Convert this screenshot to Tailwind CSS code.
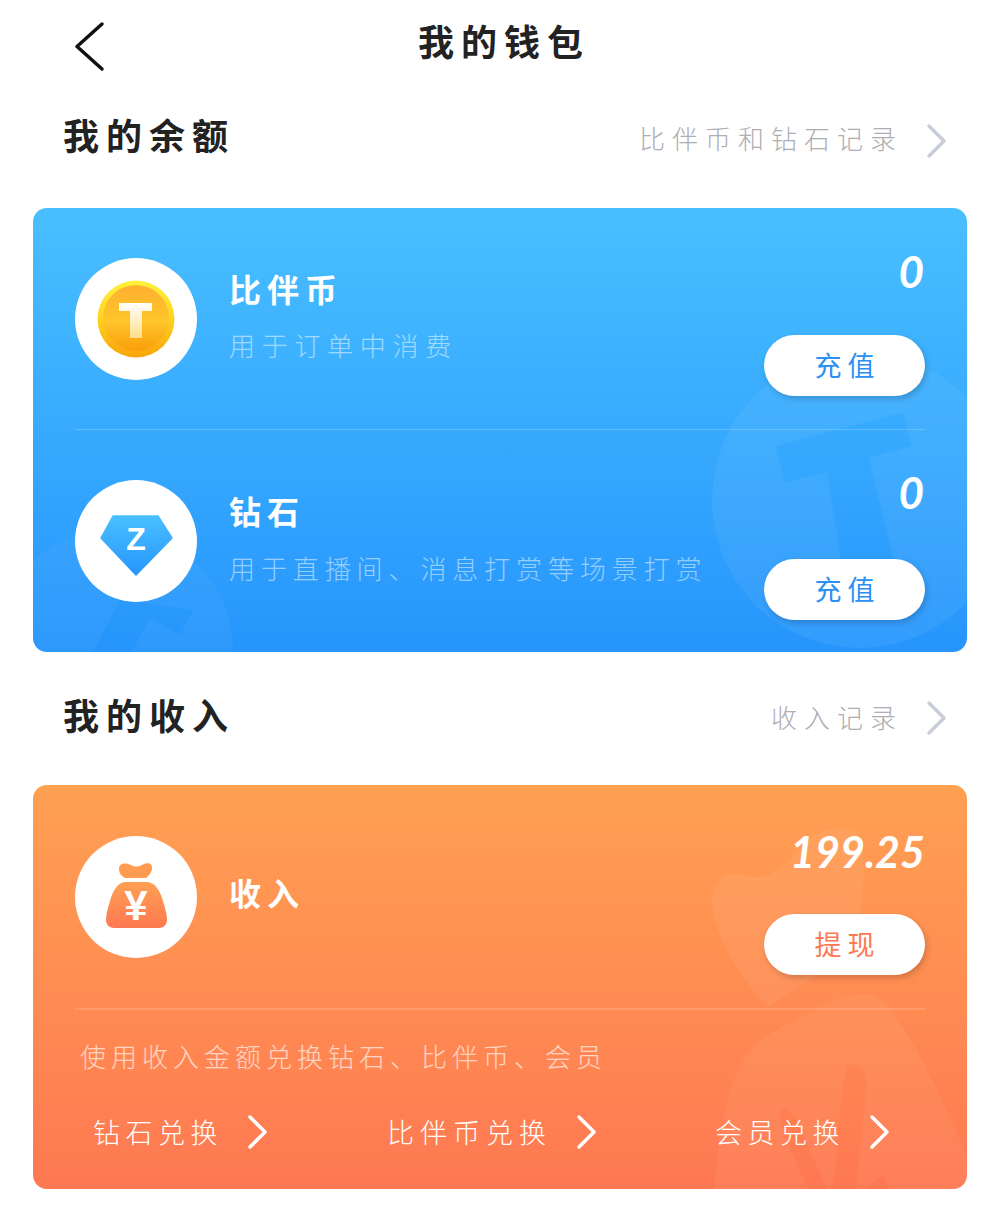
<!DOCTYPE html>
<html lang="zh-CN">
<head>
    <meta charset="UTF-8">
    <meta name="viewport" content="width=device-width, initial-scale=1.0">
    <title>我的钱包</title>
    <script src="https://cdn.jsdelivr.net/npm/@tailwindcss/browser@4"></script>
</head>
<body class="bg-white font-['Noto_Sans_CJK_SC',sans-serif]">
<div class="w-[1000px] h-[1219px] overflow-hidden">

    <!-- header -->
    <div class="relative h-[90px] flex items-center justify-center">
        <svg class="absolute left-[72px] top-[20px]" width="36" height="54" viewBox="0 0 36 54" fill="none">
            <path d="M30 4 L5 26.500 L30 49" stroke="#111" stroke-width="3.500" stroke-linecap="round" stroke-linejoin="round"/>
        </svg>
        <h1 class="text-[36px] leading-none font-bold tracking-[7px] text-[#222] -mt-[10px] ml-[8px]">我的钱包</h1>
    </div>

    <!-- balance title -->
    <div class="h-[118px] pl-[63px] pr-[52px] flex items-start justify-between pt-[22px]">
        <h2 class="text-[36px] leading-[44px] font-bold tracking-[7px] text-[#222]">我的余额</h2>
        <div class="flex items-center gap-[23px] mt-[7px] h-[44px]">
            <span class="text-[26px] font-light tracking-[7px] text-[#adadb3] -mt-[7px]">比伴币和钻石记录</span>
            <svg width="22" height="36" viewBox="0 0 22 36" fill="none"><path d="M3 3 L18 18 L3 33" stroke="#c9cdda" stroke-width="3.500" stroke-linecap="round" stroke-linejoin="round"/></svg>
        </div>
    </div>

    <!-- balance card -->
    <div class="relative mx-[33px] w-[934px] h-[444px] rounded-[14px] overflow-hidden bg-linear-to-b from-[#49bfff] to-[#2695fc]">
        <svg class="absolute inset-0" width="934" height="444" viewBox="0 0 934 444">
            <path fill="#fff" fill-opacity="0.06" fill-rule="evenodd" d="M679 292 a148 148 0 1 0 296 0 a148 148 0 1 0 -296 0 Z M743 238 L870 204 L879 238 L836 250 L872 400 L816 400 L794 264 L752 274 Z"/>
            <path fill="#fff" fill-opacity="0.04" fill-rule="evenodd" d="M-40 442 a120 120 0 1 0 240 0 a120 120 0 1 0 -240 0 Z M87 392 L160 402 L147 427 L117 410 L99 444 L60 444 Z"/>
        </svg>

        <div class="relative h-[222px] mx-[42px] pt-[50px] flex border-b border-white/20">
            <div class="w-[122px] h-[122px] rounded-full bg-white flex items-center justify-center shrink-0">
                <svg width="80" height="80" viewBox="0 0 80 80">
                    <defs>
                        <linearGradient id="coinRim" x1="0" y1="0" x2="0" y2="1"><stop offset="0" stop-color="#fff23c"/><stop offset="0.5" stop-color="#ffd21f"/><stop offset="1" stop-color="#f9a40a"/></linearGradient>
                        <linearGradient id="coinFace" x1="0" y1="0" x2="0" y2="1"><stop offset="0" stop-color="#ffb030"/><stop offset="0.55" stop-color="#ffc52a"/><stop offset="1" stop-color="#f99e0a"/></linearGradient>
                        <linearGradient id="coinT" x1="0" y1="0" x2="0" y2="1"><stop offset="0" stop-color="#fff"/><stop offset="1" stop-color="#ffdf8a"/></linearGradient>
                    </defs>
                    <circle cx="40" cy="40" r="38.500" fill="url(#coinRim)"/>
                    <circle cx="40" cy="39" r="33" fill="url(#coinFace)"/>
                    <path d="M23 24 H56 V32 H46 V59 H34 V32 H23 Z" fill="url(#coinT)"/>
                </svg>
            </div>
            <div class="ml-[32px] pt-[7px] flex-1">
                <div class="text-[32px] leading-[46px] font-bold tracking-[6px] text-white">比伴币</div>
                <div class="mt-[15px] text-[26px] leading-[38px] font-light tracking-[6.700px] text-white/50">用于订单中消费</div>
            </div>
            <div class="flex flex-col items-end -mt-[13px]">
                <div class="text-[44px] leading-[52px] italic font-bold font-['Lato',sans-serif] text-white pr-[1px]">0</div>
                <button class="mt-[38px] w-[161px] h-[61px] pl-[6px] rounded-full bg-white text-[27px] tracking-[6px] text-[#2a90f5] shadow-[2px_3px_6px_rgba(0,0,0,0.18)]">充值</button>
            </div>
        </div>

        <div class="relative h-[222px] mx-[42px] pt-[50px] flex">
            <div class="w-[122px] h-[122px] rounded-full bg-white shrink-0">
                <svg width="122" height="122" viewBox="0 0 122 122">
                    <defs>
                        <linearGradient id="gem" x1="0" y1="0" x2="0" y2="1"><stop offset="0" stop-color="#49bfff"/><stop offset="1" stop-color="#2696fc"/></linearGradient>
                    </defs>
                    <path d="M38 36 H83 L97 58 L61 95 L26 58 Z" fill="url(#gem)" stroke="url(#gem)" stroke-width="1.500" stroke-linejoin="round"/>
                    <text x="61" y="70" text-anchor="middle" font-family="Liberation Sans" font-weight="700" font-size="32" fill="#fff">Z</text>
                </svg>
            </div>
            <div class="ml-[32px] pt-[7px] flex-1">
                <div class="text-[32px] leading-[46px] font-bold tracking-[6px] text-white">钻石</div>
                <div class="mt-[16px] text-[26px] leading-[38px] font-light tracking-[5.900px] text-white/50 whitespace-nowrap">用于直播间、消息打赏等场景打赏</div>
            </div>
            <div class="flex flex-col items-end -mt-[14px]">
                <div class="text-[44px] leading-[52px] italic font-bold font-['Lato',sans-serif] text-white pr-[1px]">0</div>
                <button class="mt-[41px] w-[161px] h-[61px] pl-[6px] rounded-full bg-white text-[27px] tracking-[6px] text-[#2a90f5] shadow-[2px_3px_6px_rgba(0,0,0,0.18)]">充值</button>
            </div>
        </div>
    </div>

    <!-- income title -->
    <div class="h-[133px] pl-[63px] pr-[52px] flex items-start justify-between pt-[40px]">
        <h2 class="text-[36px] leading-[44px] font-bold tracking-[7px] text-[#222]">我的收入</h2>
        <div class="flex items-center gap-[23px] mt-[4px] h-[44px]">
            <span class="text-[26px] font-light tracking-[7px] text-[#adadb3] -mt-[4px]">收入记录</span>
            <svg width="22" height="36" viewBox="0 0 22 36" fill="none"><path d="M3 3 L18 18 L3 33" stroke="#c9cdda" stroke-width="3.500" stroke-linecap="round" stroke-linejoin="round"/></svg>
        </div>
    </div>

    <!-- income card -->
    <div class="relative mx-[33px] w-[934px] h-[404px] rounded-[14px] overflow-hidden bg-linear-to-b from-[#ffa052] to-[#fe7852]">
        <svg class="absolute inset-0" width="934" height="404" viewBox="0 0 934 404">
            <path fill="#fff" fill-opacity="0.06" d="M679 115 C679 95 695 85 712 90 C735 97 750 85 765 65 C780 45 810 35 825 50 C835 75 832 130 815 165 C790 190 760 205 735 222 C715 205 679 150 679 115 Z"/>
            <path fill="#fff" fill-opacity="0.05" fill-rule="evenodd" d="M681 404 C690 320 700 270 735 250 C770 230 810 205 840 210 C860 215 900 290 934 372 L934 404 Z M814 282 C824 275 834 285 834 300 C830 340 826 370 824 404 L800 404 C806 360 806 310 814 282 Z M747 326 C755 320 762 330 770 350 L794 404 L775 404 C765 380 745 345 747 326 Z M832 404 L850 390 L856 404 Z"/>
        </svg>

        <div class="relative h-[225px] mx-[42px] pt-[51px] flex border-b-2 border-white/15">
            <div class="w-[122px] h-[122px] rounded-full bg-white shrink-0">
                <svg width="122" height="122" viewBox="0 0 122 122">
                    <defs>
                        <linearGradient id="bag" x1="0" y1="0" x2="0" y2="1"><stop offset="0" stop-color="#ffa052"/><stop offset="1" stop-color="#fe7852"/></linearGradient>
                    </defs>
                    <path d="M44 33 C44 26 52 27 56 29 C59 31 63 31 67 29 C72 26 78 27 77 33 C76 38 73 40 71 42 H50 C47 40 44 38 44 33 Z" fill="#ff9c52"/>
                    <path d="M51 46 H71 C80 46 85 54 88 65 C90 72 92 78 92 84 C92 89 88 92 84 92 H39 C35 92 31 89 31 84 C31 78 33 72 35 65 C38 54 43 46 51 46 Z" fill="url(#bag)"/>
                    <text x="61" y="84" text-anchor="middle" font-family="Liberation Sans" font-weight="700" font-size="42" fill="#fff">¥</text>
                </svg>
            </div>
            <div class="ml-[32px] pt-[33px] flex-1">
                <div class="text-[32px] leading-[46px] font-bold tracking-[6px] text-white">收入</div>
            </div>
            <div class="flex flex-col items-end -mt-[10px]">
                <div class="text-[43px] leading-[52px] italic font-bold font-['Lato',sans-serif] text-white">199.25</div>
                <button class="mt-[36px] w-[161px] h-[61px] pl-[6px] rounded-full bg-white text-[27px] tracking-[6px] text-[#fe7852] shadow-[2px_3px_6px_rgba(0,0,0,0.18)]">提现</button>
            </div>
        </div>

        <div class="relative pl-[47px] pt-[27px] text-[26px] leading-[38px] font-light tracking-[5px] text-white/65 whitespace-nowrap">使用收入金额兑换钻石、比伴币、会员</div>

        <div class="relative mt-[37px] h-[40px] flex items-center text-[27px] font-light text-white whitespace-nowrap">
            <div class="absolute left-[60px] flex items-center gap-[24px] tracking-[5.500px]">
                <span>钻石兑换</span>
                <svg width="22" height="36" viewBox="0 0 22 36" fill="none"><path d="M3 3 L18 18 L3 33" stroke="#fff" stroke-width="3.500" stroke-linecap="round" stroke-linejoin="round"/></svg>
            </div>
            <div class="absolute left-[354px] flex items-center gap-[24px] tracking-[6px]">
                <span>比伴币兑换</span>
                <svg width="22" height="36" viewBox="0 0 22 36" fill="none"><path d="M3 3 L18 18 L3 33" stroke="#fff" stroke-width="3.500" stroke-linecap="round" stroke-linejoin="round"/></svg>
            </div>
            <div class="absolute left-[682px] flex items-center gap-[24px] tracking-[5.500px]">
                <span>会员兑换</span>
                <svg width="22" height="36" viewBox="0 0 22 36" fill="none"><path d="M3 3 L18 18 L3 33" stroke="#fff" stroke-width="3.500" stroke-linecap="round" stroke-linejoin="round"/></svg>
            </div>
        </div>
    </div>
</div>
</body>
</html>
